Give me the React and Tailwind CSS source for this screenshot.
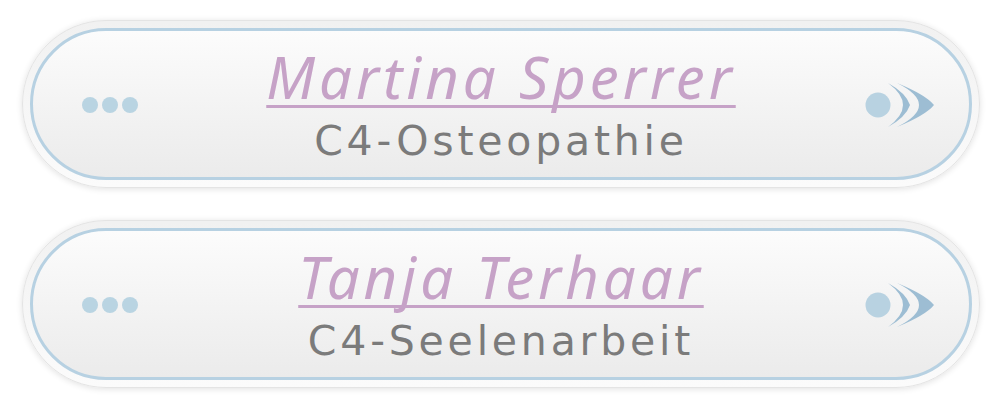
import React from "react";

const people = [
  { name: "Martina Sperrer", area: "C4-Osteopathie" },
  { name: "Tanja Terhaar", area: "C4-Seelenarbeit" },
];

function Dots() {
  return (
    <div className="flex gap-[4px]">
      <span className="w-[16px] h-[16px] rounded-full bg-[#b9d4e2]" />
      <span className="w-[16px] h-[16px] rounded-full bg-[#b9d4e2]" />
      <span className="w-[16px] h-[16px] rounded-full bg-[#b9d4e2]" />
    </div>
  );
}

function Arrow() {
  return (
    <svg width="72" height="48" viewBox="0 0 72 48">
      <circle cx="14" cy="24" r="12.5" fill="#b8d2e1" />
      <path d="M24 2 Q42 12 46 24 Q42 36 24 46 Q54 24 24 2 Z" fill="#9dbdd3" />
      <path d="M33 2 Q62 14 70 24 Q62 34 33 46 Q77 24 33 2 Z" fill="#9dbdd3" />
    </svg>
  );
}

function Card({ name, area }) {
  return (
    <div className="rounded-full p-[7px] border border-[#e4e4e4] bg-gradient-to-b from-[#f1f1f1] to-[#fbfbfb] shadow-[0_1px_6px_rgba(0,0,0,0.12)]">
      <div className="h-[152px] rounded-full border-[3px] border-[#b7d1e2] bg-gradient-to-b from-[#fcfcfc] to-[#ebebeb] grid grid-cols-[120px_1fr_120px] items-center">
        <div className="pl-[49px] pt-[2px]">
          <Dots />
        </div>
        <div className="flex flex-col items-center">
          <div className="font-['Noto_Sans',sans-serif] italic text-[58px] leading-[64px] tracking-[4px] text-[#c6a2c7] underline decoration-[3px] underline-offset-[6px] [text-decoration-skip-ink:none] mt-[2px]">
            {name}
          </div>
          <div className="font-['DejaVu_Sans',sans-serif] text-[41px] leading-[48px] tracking-[3.8px] text-[#7b7b7b] mt-[8px]">
            {area}
          </div>
        </div>
        <div className="flex justify-end pr-[33px] pt-[2px]">
          <Arrow />
        </div>
      </div>
    </div>
  );
}

export default function App() {
  return (
    <div className="min-h-screen bg-white pt-[20px] px-[22px] flex flex-col gap-[32px]">
      {people.map((p) => (
        <Card key={p.name} name={p.name} area={p.area} />
      ))}
    </div>
  );
}
